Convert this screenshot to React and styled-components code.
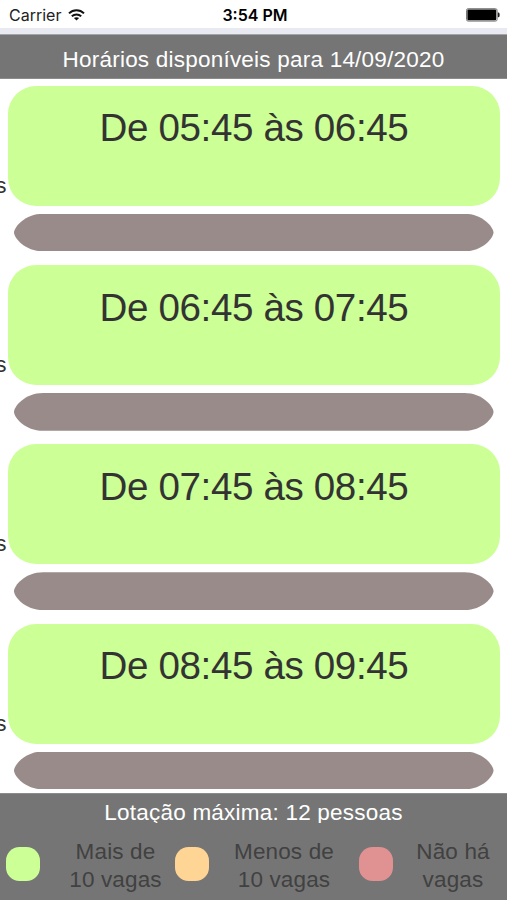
import React from "react";
import styled, { createGlobalStyle } from "styled-components";

const slots = [
  { from: "05:45", to: "06:45" },
  { from: "06:45", to: "07:45" },
  { from: "07:45", to: "08:45" },
  { from: "08:45", to: "09:45" },
];

const App = () => {
  return (
    <Screen>
      <GlobalStyle />
      <StatusBar>
        <Carrier>
          Carrier
          <svg width="17" height="12" viewBox="0 0 17 12" fill="none" stroke="#111">
            <path d="M1 4.4C5.2 0.3 11.8 0.3 16 4.4" strokeWidth="2" />
            <path d="M3.8 7.3C6.5 4.8 10.5 4.8 13.2 7.3" strokeWidth="1.9" />
            <path d="M8.5 11.6L5.9 9.1C7.4 7.8 9.6 7.8 11.1 9.1Z" fill="#111" stroke="none" />
          </svg>
        </Carrier>
        <Clock>3:54 PM</Clock>
        <Battery>
          <svg width="34" height="14" viewBox="0 0 34 14">
            <rect x="0.5" y="0.7" width="30.6" height="12.4" rx="1.6" fill="#fff" stroke="#777" />
            <rect x="1.4" y="1.6" width="28.8" height="10.6" rx="1" fill="#000" />
            <path d="M31.8 4.6h0.6a1.3 2.3 0 0 1 0 4.6h-0.6z" fill="#222" />
          </svg>
        </Battery>
      </StatusBar>
      <Divider />
      <Title>
        <span>Horários disponíveis para 14/09/2020</span>
      </Title>
      <List>
        {slots.map((slot) => (
          <Slot key={slot.from}>
            <Row>
              <Overflowing>s</Overflowing>
              <Card>
                De {slot.from} às {slot.to}
              </Card>
            </Row>
            <Bar />
          </Slot>
        ))}
      </List>
      <Footer>
        <Capacity>
          <span>Lotação máxima: 12 pessoas</span>
        </Capacity>
        <Legend>
          <Swatch $color="#ccff95" />
          <Label $width={135} $indent={16}>
            Mais de
            <br />
            10 vagas
          </Label>
          <Swatch $color="#ffd595" />
          <Label $width={150} $indent={0}>
            Menos de
            <br />
            10 vagas
          </Label>
          <Swatch $color="#e09192" />
          <Label $width={114} $indent={6}>
            Não há
            <br />
            vagas
          </Label>
        </Legend>
      </Footer>
    </Screen>
  );
};

export default App;

const GlobalStyle = createGlobalStyle`
  * {
    box-sizing: border-box;
  }
  body {
    margin: 0;
    background: #fff;
    font-family: "Liberation Sans", Arial, sans-serif;
  }
`;
const Screen = styled.div`
  display: flex;
  flex-direction: column;
  width: 507px;
  height: 900px;
  overflow: hidden;
`;
const StatusBar = styled.div`
  display: grid;
  grid-template-columns: 1fr auto 1fr;
  align-items: center;
  flex: none;
  height: 28px;
  padding: 2px 7px 0 9px;
  font-family: Inter, sans-serif;
  font-size: 16px;
  color: #222;
`;
const Carrier = styled.div`
  display: flex;
  align-items: center;
  gap: 7px;
`;
const Clock = styled.div`
  font-weight: 600;
  color: #000;
  padding-left: 1px;
`;
const Battery = styled.div`
  display: flex;
  justify-content: flex-end;
`;
const Divider = styled.div`
  flex: none;
  height: 7px;
  background: #e9e9f1;
  border-bottom: 1px solid #a4a4a7;
`;
const Title = styled.div`
  display: flex;
  align-items: center;
  justify-content: center;
  flex: none;
  height: 44px;
  padding-top: 6px;
  background: #757575;
  border-bottom: 1px solid #8c8c8c;
  color: #fff;
  font-size: 22.5px;
  letter-spacing: 0.22px;
  white-space: nowrap;
`;
const List = styled.div`
  flex: 1;
  min-height: 0;
  padding-top: 6.7px;
  overflow: hidden;
`;
const Slot = styled.div`
  height: 179.3px;
`;
const Row = styled.div`
  display: flex;
  align-items: flex-start;
`;
const Overflowing = styled.div`
  display: flex;
  justify-content: flex-end;
  flex: none;
  width: 8px;
  padding: 88px 1.5px 0 0;
  font-size: 22.5px;
  line-height: 24px;
  color: #333;
`;
const Card = styled.div`
  width: 492px;
  height: 120px;
  padding-top: 19.6px;
  border-radius: 28px;
  background: #ccff95;
  color: #333;
  font-size: 38.6px;
  letter-spacing: -0.38px;
  line-height: 46px;
  text-align: center;
`;
/* the ends narrow to a soft point instead of a full half circle */
const Bar = styled.div`
  width: 479.5px;
  height: 37.8px;
  margin: 8px 0 0 14px;
  background: #9a8b8b;
  clip-path: path(
    "M0 18.9C0 13.5 11 0 29 0H450.5C468.5 0 479.5 13.5 479.5 18.9C479.5 24.3 468.5 37.8 450.5 37.8H29C11 37.8 0 24.3 0 18.9Z"
  );
`;
const Footer = styled.div`
  flex: none;
  height: 107px;
  border-top: 1px solid #8c8c8c;
  background: #757575;
`;
const Capacity = styled.div`
  height: 29px;
  padding-top: 5.5px;
  overflow: hidden;
  color: #fff;
  font-size: 22.5px;
  letter-spacing: 0.22px;
  line-height: 26px;
  text-align: center;
`;
const Legend = styled.div`
  display: flex;
  align-items: flex-start;
  padding: 15px 0 0 6px;
  color: #414141;
  font-size: 22.5px;
  letter-spacing: 0.15px;
  line-height: 28px;
`;
const Swatch = styled.div`
  flex: none;
  width: 34px;
  height: 34px;
  margin-top: 9px;
  border-radius: 13.5px;
  background: ${({ $color }) => $color};
`;
const Label = styled.div`
  flex: none;
  width: ${({ $width }) => $width}px;
  padding-left: ${({ $indent }) => $indent}px;
  text-align: center;
`;
